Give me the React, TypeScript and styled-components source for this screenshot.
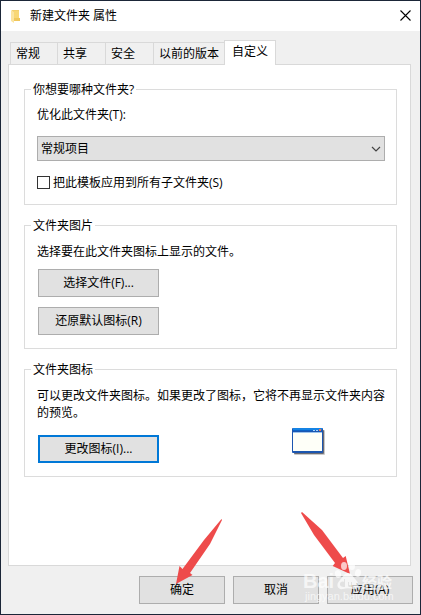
import React from "react";
import styled, { createGlobalStyle, css } from "styled-components";

const GlobalStyle = createGlobalStyle`
  *, *::before, *::after { box-sizing: border-box; }
  body {
    margin: 0;
    background: #f0f0f0;
    color: #000;
    font-family: "Open Sans", "Noto Sans CJK SC", sans-serif;
    font-size: 12px;
    line-height: 16px;
  }
  button, select, input { font: inherit; color: inherit; margin: 0; }
`;

const Dialog = styled.main`
  display: flex;
  flex-direction: column;
  min-height: 100vh;
  border: 1px solid #1b2638;
  background: #f0f0f0;
`;

const TitleBar = styled.header`
  display: flex;
  align-items: center;
  height: 30px;
  padding: 0 9px 1px 10px;
  background: #fff;
`;

const Title = styled.h1`
  flex: 1;
  margin: 0 0 0 9px;
  font-size: 12px;
  font-weight: 400;
`;

const CloseButton = styled.button`
  display: flex;
  padding: 0;
  border: 0;
  background: none;
`;

const Body = styled.div`
  flex: 1;
  display: flex;
  flex-direction: column;
  padding: 9px 9px 0 7px;
`;

const TabList = styled.div`
  display: flex;
  align-items: flex-end;
  padding-left: 2px;
`;

const Tab = styled.button<{ $active?: boolean }>`
  height: 22px;
  padding: 0 5px;
  border: 1px solid #d9d9d9;
  border-width: 1px 0 0 1px;
  background: #f0f0f0;
  text-align: left;
  white-space: nowrap;
  min-width: 48px;

  &:first-child { min-width: 47px; }

  ${({ $active }) =>
    $active &&
    css`
      position: relative;
      height: 25px;
      margin-bottom: -1px;
      padding: 0 7px 3px;
      border-width: 1px 1px 0;
      background: #fff;
    `}
`;

const Panel = styled.section`
  flex: 1;
  display: flex;
  flex-direction: column;
  gap: 13px;
  padding: 17px 13px 16px 15px;
  border: 1px solid #d9d9d9;
  background: #fff;
`;

const Group = styled.fieldset`
  min-width: 0;
  margin: 0;
  padding: 10px 11px 13px 12px;
  border: 1px solid #dcdcdc;
`;

const Legend = styled.legend`
  margin-left: -6px;
  padding: 0 2px;
  line-height: 15px;
`;

const FieldLabel = styled.label`
  display: block;
`;

const SelectBox = styled.div`
  display: grid;
  align-items: center;
  margin: 13px 0 14px;

  > * { grid-area: 1 / 1; }
  > svg { justify-self: end; margin-right: 4px; pointer-events: none; }
`;

const Select = styled.select`
  appearance: none;
  width: 100%;
  height: 25px;
  padding: 0 20px 0 3px;
  border: 1px solid #adadad;
  border-radius: 0;
  background: #e1e1e1;
`;

const CheckRow = styled.label`
  display: flex;
  align-items: flex-start;
  gap: 3px;
`;

const Checkbox = styled.input`
  appearance: none;
  width: 13px;
  height: 13px;
  margin-top: 1px;
  border: 1px solid #333;
  background: #fff;

  &:checked { background: #0078d7; }
`;

const Text = styled.p`
  margin: 0;
  line-height: 17px;
`;

const Button = styled.button<{ $focused?: boolean }>`
  height: 28px;
  padding: 0 4px;
  border: ${({ $focused }) => ($focused ? "2px solid #0078d7" : "1px solid #adadad")};
  background: #e1e1e1;
`;

const ButtonStack = styled.div`
  display: grid;
  grid-template-columns: 121px;
  gap: 10px;
  margin: 9px 0 0 1px;
`;

const IconRow = styled.div`
  display: grid;
  grid-template-columns: 121px auto;
  justify-content: space-between;
  align-items: end;
  margin: 7px 59px 0 1px;
`;

const IconPreview = styled.div`
  display: flex;
  align-self: start;
`;

const PreviewButton = styled(Button)`
  margin-top: 7px;
`;

const Footer = styled.footer`
  position: relative;
  display: flex;
  justify-content: flex-end;
  gap: 8px;
  padding: 10px 7px 10px 0;

  > button { width: 86px; }
`;

const Overlay = styled.svg`
  position: absolute;
  right: 0;
  bottom: 0;
  pointer-events: none;
`;

const FolderIcon = () => (
  <svg width="10" height="14" viewBox="0 0 10 14" aria-hidden="true">
    <path d="M1 1h7v11H2z" fill="#f3cf6c" />
    <path d="M0 1l3 2v11l-3-2z" fill="#fbe4a0" />
    <path d="M3 2h5v7H3z" fill="#f8d775" />
    <path d="M3 9h6v3H3z" fill="#f0c75c" />
  </svg>
);

const CloseIcon = () => (
  <svg width="11" height="11" viewBox="0 0 11 11" aria-hidden="true">
    <path d="M.5.5l10 10M10.500.5l-10 10" stroke="#000" strokeWidth="1.100" />
  </svg>
);

const Chevron = () => (
  <svg width="10" height="6" viewBox="0 0 10 6" aria-hidden="true">
    <path d="M1 1l4 4 4-4" fill="none" stroke="#444" strokeWidth="1.200" />
  </svg>
);

const WindowIcon = () => (
  <svg width="34" height="28" viewBox="0 0 34 28" role="img" aria-label="图标预览">
    <rect x="2" y="2" width="31" height="25" rx="1" fill="#c9c9c9" />
    <rect x="2" y="2" width="30" height="24" rx="1" fill="#6b6b73" />
    <rect width="31" height="25" rx="1" fill="#1c56b0" />
    <rect x="1" width="29" height="2" fill="#1583e4" />
    <rect x="1" y="2" width="29" height="1" fill="#0a62c8" />
    <rect x="1" y="4" width="29" height="1" fill="#9cc4ee" />
    <rect x="1" y="5" width="29" height="18" fill="#fefff8" />
    <path d="M21 2h2v1h-2zM24 2h2v1h-2z" fill="#a9d2fa" />
    <rect x="27" y="1" width="2" height="2" fill="#ee7350" />
  </svg>
);

const Annotations = () => (
  <Overlay width="284" height="104" viewBox="136 510 284 104" aria-hidden="true">
    <g fill="#ee4b4b">
      <path d="M176 584L179.500 566L182.500 569L204 540L221.500 519L222 520L210 544L190 573L192.500 575Z" />
      <path d="M350 574L345.700 556L343 558L322 530L302 512L301 513L314 535L335 563L332.700 566Z" />
    </g>
    <g fill="#fff" fillOpacity="0.700">
      <ellipse cx="338" cy="574" rx="3" ry="4" transform="rotate(-15 338 574)" />
      <ellipse cx="344" cy="566" rx="3" ry="4" />
      <ellipse cx="352" cy="566" rx="3" ry="4" />
      <ellipse cx="358" cy="573" rx="3" ry="4" transform="rotate(15 358 573)" />
      <path
        fillRule="evenodd"
        d="M348 573c4 0 5 4 8 7 5 5 2 10-3 9-3-1-7-1-10 0-5 1-8-4-3-9 3-3 4-7 8-7z
           M345 579v8c-4 0-5-1-5-3s2-3 4-2v-3zM348 582h1v3h2v-3h1v5h-3l-1-1z"
      />
      <text x="303" y="588" fontFamily="Liberation Sans" fontSize="20" fontWeight="700">
        Bai
      </text>
      <text x="362" y="588" fontFamily="Noto Sans CJK SC" fontSize="15" fontWeight="700">
        经验
      </text>
      <text x="305" y="600" fontFamily="Liberation Sans" fontSize="11">
        jingyan.baidu.com
      </text>
    </g>
  </Overlay>
);

const TABS = ["常规", "共享", "安全", "以前的版本", "自定义"];

export default function App() {
  return (
    <>
      <GlobalStyle />
      <Dialog>
        <TitleBar>
          <FolderIcon />
          <Title>新建文件夹 属性</Title>
          <CloseButton type="button" aria-label="关闭">
            <CloseIcon />
          </CloseButton>
        </TitleBar>
        <Body>
          <TabList role="tablist">
            {TABS.map((name) => (
              <Tab key={name} type="button" role="tab" aria-selected={name === "自定义"} $active={name === "自定义"}>
                {name}
              </Tab>
            ))}
          </TabList>
          <Panel role="tabpanel">
            <Group>
              <Legend>你想要哪种文件夹?</Legend>
              <FieldLabel htmlFor="template">优化此文件夹(T):</FieldLabel>
              <SelectBox>
                <Select id="template" defaultValue="常规项目">
                  <option>常规项目</option>
                </Select>
                <Chevron />
              </SelectBox>
              <CheckRow>
                <Checkbox type="checkbox" />
                把此模板应用到所有子文件夹(S)
              </CheckRow>
            </Group>
            <Group>
              <Legend>文件夹图片</Legend>
              <Text>选择要在此文件夹图标上显示的文件。</Text>
              <ButtonStack>
                <Button type="button">选择文件(F)...</Button>
                <Button type="button">还原默认图标(R)</Button>
              </ButtonStack>
            </Group>
            <Group>
              <Legend>文件夹图标</Legend>
              <Text>可以更改文件夹图标。如果更改了图标，它将不再显示文件夹内容的预览。</Text>
              <IconRow>
                <PreviewButton type="button" $focused>
                  更改图标(I)...
                </PreviewButton>
                <IconPreview>
                  <WindowIcon />
                </IconPreview>
              </IconRow>
            </Group>
          </Panel>
        </Body>
        <Footer>
          <Button type="button">确定</Button>
          <Button type="button">取消</Button>
          <Button type="button">应用(A)</Button>
          <Annotations />
        </Footer>
      </Dialog>
    </>
  );
}
